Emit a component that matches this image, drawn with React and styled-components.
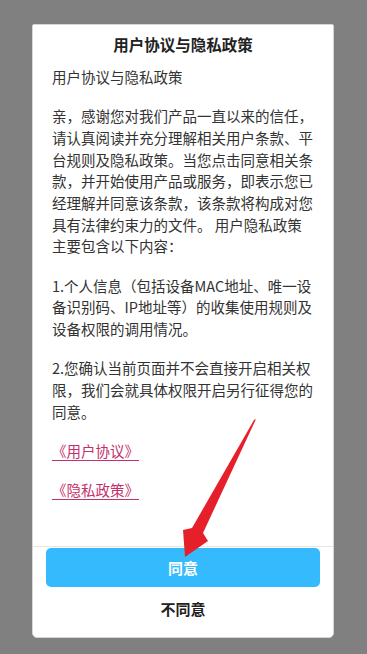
import React from "react";
import styled, { createGlobalStyle } from "styled-components";

const Global = createGlobalStyle`
  html, body { margin: 0; padding: 0; }
  body {
    background: #808080;
    font-family: "Noto Sans CJK SC", "Noto Sans", sans-serif;
  }
`;

const Screen = styled.div`
  position: relative;
  width: 367px;
  height: 654px;
  box-sizing: border-box;
  padding: 24px 33px 0 32px;
  background: #808080;
  overflow: hidden;
`;

const Dialog = styled.div`
  width: 302px;
  height: 614px;
  box-sizing: border-box;
  background: #fff;
  border: 1px solid #d6d6d6;
  border-radius: 2px 2px 5px 5px;
  display: flex;
  flex-direction: column;
`;

const Title = styled.div`
  padding: 9px 0 10px;
  line-height: 20px;
  text-align: center;
  font-size: 15.5px;
  font-weight: 700;
  color: #222;
`;

const Content = styled.div`
  flex: 1;
  overflow: hidden;
  padding: 2px 19px 0 19px;
  display: flex;
  flex-direction: column;
  gap: 17.5px;
`;

const Para = styled.p`
  margin: 0;
  font-size: 14.5px;
  line-height: 21.7px;
  color: #333;
`;

const Link = styled.a`
  align-self: flex-start;
  font-size: 14.5px;
  line-height: 21.7px;
  color: #c4306c;
  text-decoration: underline;
  text-underline-offset: 3px;
  text-decoration-thickness: 1px;
`;

const Divider = styled.div`
  height: 1px;
  background: #e6e6e6;
`;

const Actions = styled.div`
  display: flex;
  flex-direction: column;
  padding: 1px 13px 8px;
`;

const Agree = styled.button`
  height: 39px;
  border: none;
  border-radius: 5px;
  background: #35bbfd;
  color: #fff;
  font-family: inherit;
  font-size: 15px;
  font-weight: 700;
`;

const Disagree = styled.button`
  height: 42px;
  border: none;
  background: transparent;
  color: #222;
  font-family: inherit;
  font-size: 15px;
  font-weight: 700;
`;

const Arrow = styled.svg`
  position: absolute;
  left: 0;
  top: 0;
  pointer-events: none;
`;

export default function App() {
  return (
    <Screen>
      <Global />
      <Dialog>
        <Title>用户协议与隐私政策</Title>
        <Content>
          <Para>用户协议与隐私政策</Para>
          <Para>
            亲，感谢您对我们产品一直以来的信任，请认真阅读并充分理解相关用户条款、平台规则及隐私政策。当您点击同意相关条款，并开始使用产品或服务，即表示您已经理解并同意该条款，该条款将构成对您具有法律约束力的文件。 用户隐私政策主要包含以下内容：
          </Para>
          <Para>
            1.个人信息（包括设备MAC地址、唯一设备识别码、IP地址等）的收集使用规则及设备权限的调用情况。
          </Para>
          <Para>
            2.您确认当前页面并不会直接开启相关权限，我们会就具体权限开启另行征得您的同意。
          </Para>
          <Link>《用户协议》</Link>
          <Link>《隐私政策》</Link>
        </Content>
        <Divider />
        <Actions>
          <Agree>同意</Agree>
          <Disagree>不同意</Disagree>
        </Actions>
      </Dialog>
      <Arrow width="367" height="654" viewBox="0 0 367 654">
        <polygon
          points="256,419 203,533 208,541 185,557 183,530 192,528 254,420"
          fill="#e6202a"
        />
      </Arrow>
    </Screen>
  );
}
